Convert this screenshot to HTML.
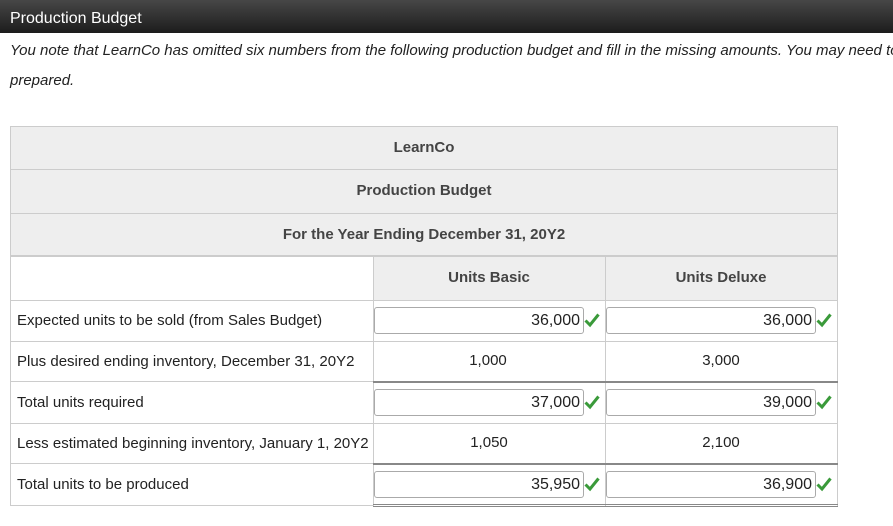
<!DOCTYPE html>
<html><head><style>
*{margin:0;padding:0;box-sizing:border-box}
body{width:893px;height:526px;background:#fff;font-family:"Liberation Sans",Arial,sans-serif;position:relative;overflow:hidden;color:#222}
.hdr{position:absolute;left:0;top:0;width:893px;height:33px;background:linear-gradient(#474747,#1c1c1c);color:#fff;font-size:16px;padding:10px 0 0 10px}
.p{position:absolute;left:10px;font-size:15px;font-style:italic;color:#222;white-space:nowrap}
.a{position:absolute}
.c{position:absolute;font-size:15px;text-align:center}
.b{font-weight:bold;color:#444}
.inp{position:absolute;height:27px;border:1px solid #aaa;border-radius:3px;background:#fff;font-size:16px;text-align:right;padding:4px 3px 0 0;color:#222}
.ck{position:absolute;width:16px;height:16px}
.l{position:absolute;left:17px;font-size:15px}
</style></head><body>
<div class="hdr">Production Budget</div>
<div class="p" style="top:42px">You note that LearnCo has omitted six numbers from the following production budget and fill in the missing amounts. You may need to</div>
<div class="p" style="top:72px">prepared.</div>

<div class="a" style="left:10px;top:126px;width:828px;height:130px;background:#eee;border:1px solid #ccc"></div>
<div class="a" style="left:10px;top:169px;width:828px;height:1px;background:#ccc"></div>
<div class="a" style="left:10px;top:213px;width:828px;height:1px;background:#ccc"></div>
<div class="a" style="left:373px;top:256px;width:465px;height:44px;background:#eee"></div>
<div class="a" style="left:10px;top:256px;width:1px;height:250px;background:#ccc"></div>
<div class="a" style="left:373px;top:256px;width:1px;height:250px;background:#ccc"></div>
<div class="a" style="left:605px;top:256px;width:1px;height:250px;background:#ccc"></div>
<div class="a" style="left:837px;top:256px;width:1px;height:250px;background:#ccc"></div>
<div class="a" style="left:10px;top:256px;width:828px;height:1px;background:#ccc"></div>
<div class="a" style="left:10px;top:300px;width:828px;height:1px;background:#ccc"></div>
<div class="a" style="left:10px;top:341px;width:828px;height:1px;background:#ccc"></div>
<div class="a" style="left:10px;top:423px;width:828px;height:1px;background:#ccc"></div>
<div class="a" style="left:10px;top:381px;width:363px;height:1px;background:#ccc"></div>
<div class="a" style="left:10px;top:463px;width:363px;height:1px;background:#ccc"></div>
<div class="a" style="left:373px;top:381px;width:465px;height:2px;background:#888"></div>
<div class="a" style="left:373px;top:463px;width:465px;height:2px;background:#888"></div>
<div class="a" style="left:10px;top:505px;width:363px;height:1px;background:#ccc"></div>
<div class="a" style="left:373px;top:504px;width:465px;height:1px;background:#888"></div>
<div class="a" style="left:373px;top:506px;width:465px;height:1px;background:#888"></div>

<div class="c b" style="left:10px;width:828px;top:139px">LearnCo</div>
<div class="c b" style="left:10px;width:828px;top:182px">Production Budget</div>
<div class="c b" style="left:10px;width:828px;top:226px">For the Year Ending December 31, 20Y2</div>
<div class="c b" style="left:373px;width:232px;top:269px">Units Basic</div>
<div class="c b" style="left:605px;width:232px;top:269px">Units Deluxe</div>

<div class="l" style="top:312px">Expected units to be sold (from Sales Budget)</div>
<div class="l" style="top:353px">Plus desired ending inventory, December 31, 20Y2</div>
<div class="l" style="top:394px">Total units required</div>
<div class="l" style="top:435px">Less estimated beginning inventory, January 1, 20Y2</div>
<div class="l" style="top:476px">Total units to be produced</div>

<div class="c" style="left:373px;width:232px;top:352px;padding-right:2px">1,000</div>
<div class="c" style="left:605px;width:232px;top:352px">3,000</div>
<div class="c" style="left:373px;width:232px;top:434px">1,050</div>
<div class="c" style="left:605px;width:232px;top:434px">2,100</div>

<div class="inp" style="left:374px;top:307px;width:210px">36,000</div>
<div class="inp" style="left:606px;top:307px;width:210px">36,000</div>
<div class="inp" style="left:374px;top:389px;width:210px">37,000</div>
<div class="inp" style="left:606px;top:389px;width:210px">39,000</div>
<div class="inp" style="left:374px;top:471px;width:210px">35,950</div>
<div class="inp" style="left:606px;top:471px;width:210px">36,900</div>

<svg class="ck" style="left:584px;top:312px" viewBox="0 0 16 16"><path d="M1.5 8.5 L6 13 L14.5 2.5" fill="none" stroke="#3a9a3a" stroke-width="3"/></svg>
<svg class="ck" style="left:816px;top:312px" viewBox="0 0 16 16"><path d="M1.5 8.5 L6 13 L14.5 2.5" fill="none" stroke="#3a9a3a" stroke-width="3"/></svg>
<svg class="ck" style="left:584px;top:394px" viewBox="0 0 16 16"><path d="M1.5 8.5 L6 13 L14.5 2.5" fill="none" stroke="#3a9a3a" stroke-width="3"/></svg>
<svg class="ck" style="left:816px;top:394px" viewBox="0 0 16 16"><path d="M1.5 8.5 L6 13 L14.5 2.5" fill="none" stroke="#3a9a3a" stroke-width="3"/></svg>
<svg class="ck" style="left:584px;top:476px" viewBox="0 0 16 16"><path d="M1.5 8.5 L6 13 L14.5 2.5" fill="none" stroke="#3a9a3a" stroke-width="3"/></svg>
<svg class="ck" style="left:816px;top:476px" viewBox="0 0 16 16"><path d="M1.5 8.5 L6 13 L14.5 2.5" fill="none" stroke="#3a9a3a" stroke-width="3"/></svg>
</body></html>
